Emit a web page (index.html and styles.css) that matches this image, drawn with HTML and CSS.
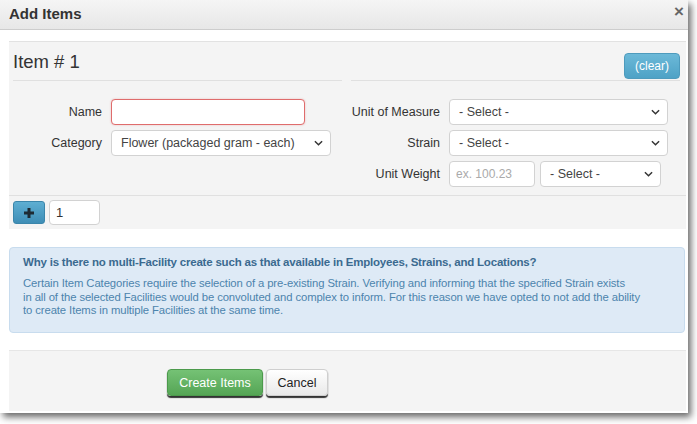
FILE: index.html
```html
<!DOCTYPE html>
<html>
<head>
<meta charset="utf-8">
<link rel="stylesheet" href="styles.css">
</head>
<body>
<div class="modal">
  <div class="modal-header">
    <span class="modal-title">Add Items</span>
    <span class="close">×</span>
  </div>
  <div class="modal-body">
    <div class="item-panel">
      <div class="item-head">
        <div class="col head-left"><span class="item-title">Item # 1</span></div>
        <div class="col head-right"><button class="btn-clear">(clear)</button></div>
      </div>
      <div class="item-form">
        <div class="col fields">
          <div class="row">
            <label class="lbl">Name</label>
            <input class="ctl ctl-error w-name" type="text">
          </div>
          <div class="row">
            <label class="lbl">Category</label>
            <div class="sel w-cat">
              <select class="ctl"><option>Flower (packaged gram - each)</option></select>
              <svg class="chev" viewBox="0 0 10 6" width="9" height="6"><path d="M1 1l4 4 4-4" fill="none" stroke="#333" stroke-width="1.6"/></svg>
            </div>
          </div>
        </div>
        <div class="col fields">
          <div class="row">
            <label class="lbl">Unit of Measure</label>
            <div class="sel w-full">
              <select class="ctl"><option>- Select -</option></select>
              <svg class="chev" viewBox="0 0 10 6" width="9" height="6"><path d="M1 1l4 4 4-4" fill="none" stroke="#333" stroke-width="1.6"/></svg>
            </div>
          </div>
          <div class="row">
            <label class="lbl">Strain</label>
            <div class="sel w-full">
              <select class="ctl"><option>- Select -</option></select>
              <svg class="chev" viewBox="0 0 10 6" width="9" height="6"><path d="M1 1l4 4 4-4" fill="none" stroke="#333" stroke-width="1.6"/></svg>
            </div>
          </div>
          <div class="row">
            <label class="lbl">Unit Weight</label>
            <input class="ctl w-weight" type="text" placeholder="ex. 100.23">
            <div class="sel w-unit">
              <select class="ctl"><option>- Select -</option></select>
              <svg class="chev" viewBox="0 0 10 6" width="9" height="6"><path d="M1 1l4 4 4-4" fill="none" stroke="#333" stroke-width="1.6"/></svg>
            </div>
          </div>
        </div>
      </div>
      <div class="add-row">
        <button class="btn-plus"><svg viewBox="0 0 10 10" width="10" height="10"><path d="M5 0v10M0 5h10" stroke="#1d2a33" stroke-width="3"/></svg></button>
        <input class="ctl count" type="text" value="1">
      </div>
    </div>
    <div class="alert">
      <div class="alert-title">Why is there no multi-Facility create such as that available in Employees, Strains, and Locations?</div>
      <p class="alert-text">Certain Item Categories require the selection of a pre-existing Strain. Verifying and informing that the specified Strain exists<br>in all of the selected Facilities would be convoluted and complex to inform. For this reason we have opted to not add the ability<br>to create Items in multiple Facilities at the same time.</p>
    </div>
    <div class="modal-footer">
      <button class="btn btn-create">Create Items</button>
      <button class="btn btn-cancel">Cancel</button>
    </div>
  </div>
</div>
</body>
</html>
```

FILE: styles.css
```css
* { box-sizing: border-box; }
html, body { margin: 0; padding: 0; background: #fff; }
body {
  font-family: "Liberation Sans", Arial, Helvetica, sans-serif;
  color: #333;
  width: 697px;
  height: 424px;
  overflow: hidden;
}
.modal {
  width: 688px;
  height: 413px;
  background: #fff;
  box-shadow: 3px 4px 7px rgba(0,0,0,0.6);
  display: flex;
  flex-direction: column;
}
.modal-header {
  height: 30px;
  padding: 0 9px;
  display: flex;
  align-items: center;
  justify-content: space-between;
  background: linear-gradient(#f5f5f5, #e7e7e7);
  border-bottom: 1px solid #cdcdcd;
}
.modal-title {
  font-weight: bold;
  font-size: 15px;
  color: #333;
  margin-top: -2px;
}
.close {
  font-size: 17px;
  font-weight: bold;
  color: #666;
  margin-right: -5px;
  margin-top: -5px;
}
.modal-body {
  flex: 1;
  padding: 11px 2px 0 9px;
  display: flex;
  flex-direction: column;
}
.item-panel {
  background: #f4f4f4;
  border-top: 1px solid #e2e2e2;
}
.item-head {
  display: flex;
  gap: 9px;
  padding: 0 6px 0 4px;
}
.item-head .col {
  flex: 1;
  height: 39px;
  border-bottom: 1px solid #e0e0e0;
  display: flex;
  align-items: center;
}
.head-right { justify-content: flex-end; }
.item-title {
  font-size: 18.5px;
  color: #333;
  margin-top: 2px;
}
.btn-clear {
  width: 56px;
  height: 26px;
  margin-top: 9px;
  border: 1px solid #4e9bbd;
  border-radius: 4px;
  background: linear-gradient(#6cb9d8, #4ea2c6);
  color: #fff;
  font-family: inherit;
  font-size: 12px;
  padding: 0;
}
.item-form {
  display: flex;
  gap: 9px;
  padding: 18px 6px 8px 4px;
  border-bottom: 1px solid #e0e0e0;
}
.fields {
  flex: 1;
  display: flex;
  flex-direction: column;
  gap: 5px;
}
.row {
  display: flex;
  align-items: center;
  gap: 9px;
  height: 26px;
}
.lbl {
  width: 89px;
  text-align: right;
  font-size: 12.5px;
  color: #333;
}
.ctl {
  height: 26px;
  border: 1px solid #d2d2d2;
  border-radius: 4px;
  background: #fff;
  font-family: inherit;
  font-size: 12.5px;
  color: #444;
  padding: 0 9px;
  margin: 0;
  outline: none;
}
.ctl::placeholder { color: #aaa; }
.ctl-error {
  border-color: #df6c6c;
  box-shadow: 0 0 2px rgba(223,108,108,0.45);
}
.w-name { width: 194px; }
.sel { position: relative; height: 26px; }
.sel select {
  width: 100%;
  -webkit-appearance: none;
  appearance: none;
}
.chev {
  position: absolute;
  right: 8px;
  top: 10px;
  pointer-events: none;
}
.w-cat { width: 220px; }
.w-full { width: 219px; }
.w-weight { width: 86px; padding: 0 6px; font-size: 12px; }
.w-unit { width: 121px; margin-left: -4px; }
.add-row {
  display: flex;
  align-items: center;
  gap: 4px;
  padding: 4px 0 4px 4px;
}
.btn-plus {
  width: 32px;
  height: 23px;
  border: 1px solid #3b86ab;
  border-radius: 3px;
  background: linear-gradient(#5eaed2, #3f8eb6);
  display: flex;
  align-items: center;
  justify-content: center;
  padding: 0;
}
.count {
  width: 51px;
  height: 25px;
  padding: 0 6px;
  font-size: 13px;
  color: #333;
}
.alert {
  margin-top: 18px;
  margin-right: 1px;
  height: 86px;
  background: #deeaf6;
  border: 1px solid #c8dcee;
  border-radius: 4px;
  padding: 8px 13px;
  color: #4c84ad;
}
.alert-title {
  font-weight: bold;
  font-size: 11.5px;
  color: #3b6a90;
  letter-spacing: -0.2px;
}
.alert-text {
  margin: 9px 0 0;
  font-size: 11.3px;
  line-height: 13.5px;
  letter-spacing: -0.1px;
}
.modal-footer {
  margin-top: 17px;
  height: 61px;
  background: #f4f4f4;
  border-top: 1px solid #e6e6e6;
  padding: 18px 0 0 158px;
  display: flex;
  align-items: flex-start;
  gap: 3px;
}
.btn {
  height: 27px;
  border-radius: 4px;
  font-family: inherit;
  font-size: 12.5px;
  padding: 0;
  box-shadow: 0 2px 1px #333;
}
.btn-create {
  width: 96px;
  border: 1px solid #4c9a4c;
  background: linear-gradient(#75c275, #55a555);
  color: #fff;
}
.btn-cancel {
  width: 62px;
  border: 1px solid #cfcfcf;
  background: linear-gradient(#ffffff, #e9e9e9);
  color: #222;
}
```
